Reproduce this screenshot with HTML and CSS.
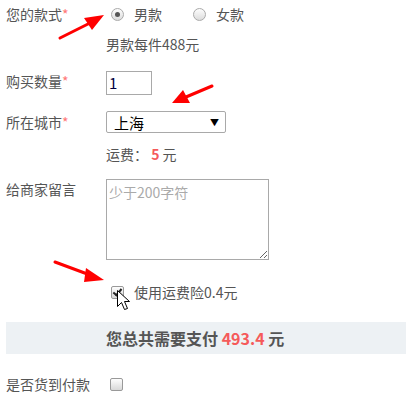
FILE: index.html
```html
<!DOCTYPE html>
<html lang="zh-CN">
<head>
    <meta charset="UTF-8">
    <title>订单</title>
    <link rel="stylesheet" href="styles.css">
</head>
<body>
    <div class="form">
        <div class="row row-style">
            <div class="label">您的款式<span class="star">*</span></div>
            <label class="choice"><span class="radio checked"></span>男款</label>
            <label class="choice"><span class="radio"></span>女款</label>
        </div>
        <div class="row row-price">
            <div class="label"></div>
            <div class="note">男款每件488元</div>
        </div>
        <div class="row row-qty">
            <div class="label">购买数量<span class="star">*</span></div>
            <div class="qty">1</div>
        </div>
        <div class="row row-city">
            <div class="label">所在城市<span class="star">*</span></div>
            <div class="select"><span>上海</span><span class="caret">▼</span></div>
        </div>
        <div class="row row-fee">
            <div class="label"></div>
            <div class="note">运费： <b class="red">5</b> 元</div>
        </div>
        <div class="row row-msg">
            <div class="label">给商家留言</div>
            <textarea class="msg" placeholder="少于200字符"></textarea>
        </div>
        <div class="row row-ins">
            <div class="label"></div>
            <label class="choice"><span class="check checked"></span>使用运费险0.4元</label>
        </div>
        <div class="total">您总共需要支付 <span class="red">493.4</span> 元</div>
        <div class="row row-cod">
            <div class="label">是否货到付款</div>
            <span class="check"></span>
        </div>
    </div>

    <!-- annotation arrows and cursor -->
    <svg class="marks" width="410" height="403" viewBox="0 0 410 403">
        <g fill="#f00" stroke="#f00" stroke-linecap="round">
            <line x1="60" y1="38" x2="90" y2="23" stroke-width="3"/>
            <polygon points="104,15 84,18 92,30" stroke="none"/>
            <line x1="212" y1="86" x2="186" y2="97" stroke-width="3"/>
            <polygon points="172,103 183,90 190,103" stroke="none"/>
            <line x1="55" y1="262" x2="90" y2="275" stroke-width="3"/>
            <polygon points="104,280 86,268 84,282" stroke="none"/>
        </g>
        <path d="M117.5,290.5 L117.5,306.5 L121.5,302.5 L124.5,309.5 L127.5,308.5 L124.5,301.5 L129.5,301.5 Z" fill="#fff" stroke="#000" stroke-width="1" stroke-linejoin="round"/>
    </svg>
</body>
</html>
```

FILE: styles.css
```css
body {
    margin: 0;
    font-family: "Noto Sans CJK SC", "Noto Sans", sans-serif;
    font-size: 14px;
    color: #555;
    background: #fff;
}
.form {
    padding: 0 4px 0 6px;
}
.row {
    display: flex;
    align-items: center;
}
.label {
    width: 100px;
    flex-shrink: 0;
    line-height: 20px;
}
.star {
    color: #f77;
}
.red {
    color: #f55a5a;
    font-weight: bold;
}
.row-style {
    height: 28px;
}
.choice {
    display: flex;
    align-items: center;
    margin-right: 26px;
    line-height: 20px;
}
.radio {
    width: 11px;
    height: 11px;
    border: 1px solid #aaa;
    border-radius: 50%;
    background: linear-gradient(#fdfdfd, #dcdcdc);
    margin: 0 10px 0 5px;
    position: relative;
}
.radio.checked::after {
    content: "";
    position: absolute;
    left: 3px;
    top: 3px;
    width: 5px;
    height: 5px;
    border-radius: 50%;
    background: #555;
}
.note {
    line-height: 20px;
}
.row-price {
    margin-top: 2px;
    height: 28px;
}
.row-qty {
    margin-top: 13px;
    align-items: flex-start;
}
.qty {
    width: 42px;
    height: 22px;
    border: 1px solid #a9a9a9;
    color: #000040;
    font-size: 15px;
    line-height: 22px;
    padding-left: 2px;
}
.row-city {
    margin-top: 16px;
}
.select {
    width: 105px;
    height: 20px;
    border: 1px solid #a9a9a9;
    border-radius: 2px;
    display: flex;
    justify-content: space-between;
    align-items: center;
    padding: 0 6px 0 7px;
    color: #000;
    font-size: 15px;
}
.caret {
    font-size: 9px;
}
.row-fee {
    margin-top: 11px;
}
.row-msg {
    margin-top: 15px;
    align-items: flex-start;
}
.msg {
    width: 157px;
    height: 75px;
    margin: 0;
    padding: 2px;
    border: 1px solid #a9a9a9;
    font-family: inherit;
    font-size: 14px;
    color: #555;
}
.msg::placeholder {
    color: #aaa;
}
.row-ins {
    margin-top: 22px;
}
.check {
    width: 11px;
    height: 11px;
    border: 1px solid #999;
    border-radius: 2px;
    background: linear-gradient(#fdfdfd, #d8d8d8);
    margin: 0 10px 0 5px;
    position: relative;
}
.check.checked::after {
    content: "";
    position: absolute;
    left: 3px;
    top: 0;
    width: 3px;
    height: 7px;
    border-right: 2px solid #222;
    border-bottom: 2px solid #222;
    transform: rotate(40deg);
}
.total {
    margin-top: 20px;
    height: 32px;
    line-height: 32px;
    background: #edf1f4;
    padding-left: 100px;
    font-size: 16px;
    font-weight: bold;
    color: #555;
}
.row-cod {
    margin-top: 20px;
}
.row-cod .check {
    margin-left: 4px;
}
.marks {
    position: absolute;
    left: 0;
    top: 0;
    pointer-events: none;
}
```
